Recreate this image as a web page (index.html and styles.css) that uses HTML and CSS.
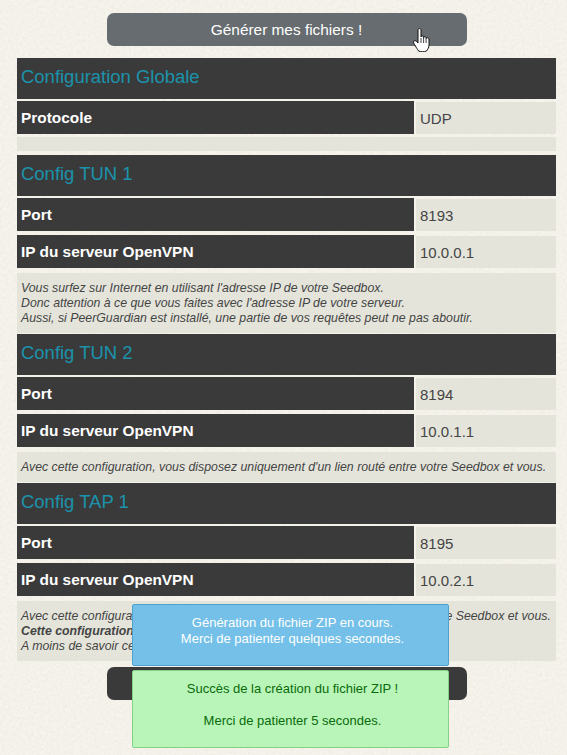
FILE: index.html
```html
<!DOCTYPE html>
<html lang="fr">
<head>
    <meta charset="UTF-8">
    <meta name="viewport" content="width=device-width, initial-scale=1.0">
    <title>Configuration OpenVPN</title>
    <link rel="stylesheet" href="styles.css">
</head>
<body>

<div class="page">
    <div class="btn-wrap">
        <button class="btn btn-hover">Générer mes fichiers !</button>
        <svg class="cursor" width="18" height="24" viewBox="0 0 18 24">
            <path d="M5 2c0-2 3-2 3 0v7c0-1.500 2.600-1.500 2.600 0v.8c0-1.500 2.500-1.500 2.500.1v.8c0-1.400 2.900-1.300 2.900.3v5.500c0 3-1 4.500-2.500 6.500-2.500 1-6 1-8 0-1-2-2.500-3.500-3-5-1.200-2-2-3-2-4 0-1.500 1.800-1.700 3-.6l1.500 1.600z" fill="#fff" stroke="#111" stroke-width="1"/>
            <path d="M8 10v5M10.600 10v5M13.100 11v4" stroke="#111" stroke-width=".8" fill="none"/>
        </svg>
    </div>

    <section class="config">
        <h2>Configuration Globale</h2>
        <div class="row"><div class="label">Protocole</div><div class="value">UDP</div></div>
        <div class="note note-empty"></div>
    </section>

    <section class="config">
        <h2>Config TUN 1</h2>
        <div class="row"><div class="label">Port</div><div class="value">8193</div></div>
        <div class="row"><div class="label">IP du serveur OpenVPN</div><div class="value">10.0.0.1</div></div>
        <div class="note">Vous surfez sur Internet en utilisant l'adresse IP de votre Seedbox.<br>Donc attention à ce que vous faites avec l'adresse IP de votre serveur.<br>Aussi, si PeerGuardian est installé, une partie de vos requêtes peut ne pas aboutir.</div>
    </section>

    <section class="config">
        <h2>Config TUN 2</h2>
        <div class="row"><div class="label">Port</div><div class="value">8194</div></div>
        <div class="row"><div class="label">IP du serveur OpenVPN</div><div class="value">10.0.1.1</div></div>
        <div class="note">Avec cette configuration, vous disposez uniquement d'un lien routé entre votre Seedbox et vous.</div>
    </section>

    <section class="config">
        <h2>Config TAP 1</h2>
        <div class="row"><div class="label">Port</div><div class="value">8195</div></div>
        <div class="row"><div class="label">IP du serveur OpenVPN</div><div class="value">10.0.2.1</div></div>
        <div class="note">Avec cette configuration, vous disposez d'un lien ponté de type TAP entre votre Seedbox et vous.<br><strong>Cette configuration est réservée aux utilisateurs avertis.</strong><br>A moins de savoir ce que vous faites, préférez le mode TUN.</div>
    </section>

    <div class="btn-wrap btn-bottom">
        <button class="btn">Générer mes fichiers !</button>
    </div>
</div>

<div class="notice notice-info">Génération du fichier ZIP en cours.<br>Merci de patienter quelques secondes.</div>
<div class="notice notice-success">Succès de la création du fichier ZIP !<br><br>Merci de patienter 5 secondes.</div>

</body>
</html>
```

FILE: styles.css
```css
html, body {
    height: 100%;
}
body {
    font-family: "Liberation Sans", Arial, sans-serif;
    margin: 0;
    padding: 0;
    background-color: #f6f4ed;
    background-image: url("data:image/svg+xml,%3Csvg xmlns='http://www.w3.org/2000/svg' width='300' height='300'%3E%3Cfilter id='n'%3E%3CfeTurbulence type='fractalNoise' baseFrequency='.35' numOctaves='3' stitchTiles='stitch'/%3E%3CfeColorMatrix values='0 0 0 0 .55 0 0 0 0 .5 0 0 0 0 .4 .18 .18 0 0 -.13'/%3E%3C/filter%3E%3Crect width='300' height='300' filter='url(%23n)'/%3E%3C/svg%3E");
    color: #444;
    overflow: hidden;
}
.page {
    padding: 13px 0 0 17px;
    width: 539px;
}
.btn-wrap {
    display: flex;
    justify-content: center;
    position: relative;
    margin-bottom: 12px;
}
.btn {
    width: 360px;
    height: 33px;
    background-color: #666c6f;
    color: white;
    border: none;
    border-radius: 7px;
    padding: 0;
    font-family: inherit;
    font-size: 15.4px;
}
.btn-bottom {
    margin-top: 6px;
}
.btn-bottom .btn {
    background-color: #3a3a3a;
}
.cursor {
    position: absolute;
    left: 396px;
    top: 15px;
}
.config h2 {
    margin: 0 0 2px;
    height: 41px;
    line-height: 38px;
    padding-left: 4px;
    background-color: #3a3a3a;
    color: #1b93ac;
    font-size: 18.48px;
    font-weight: normal;
}
.row {
    display: flex;
    gap: 2px;
    margin-bottom: 4px;
}
.label {
    flex: 1;
    height: 33px;
    line-height: 33px;
    padding-left: 4px;
    background-color: #3a3a3a;
    color: white;
    font-size: 15.4px;
    font-weight: bold;
}
.value {
    width: 136px;
    margin-top: 1px;
    height: 32px;
    line-height: 33px;
    padding-left: 4px;
    background-color: #e4e4db;
    font-size: 15px;
}
.note {
    padding: 8px 4px 7px;
    margin: 5px 0 1px;
    background-color: #e4e4db;
    font-size: 12.32px;
    font-style: italic;
    line-height: 15px;
    white-space: nowrap;
}
.note-empty {
    height: 14px;
    padding: 0;
    margin: -1px 0 4px;
}
.notice {
    position: absolute;
    left: 132px;
    width: 311px;
    padding: 10px 0 18px 4px;
    text-align: center;
    font-size: 13px;
    line-height: 16px;
    border-radius: 2px;
}
.notice-info {
    top: 604px;
    background-color: #74c0e8;
    border: 1px solid #4ea2cf;
    color: white;
}
.notice-success {
    top: 670px;
    background-color: #b9f5b9;
    border: 1px solid #86d186;
    color: #0a6b0a;
}
```
